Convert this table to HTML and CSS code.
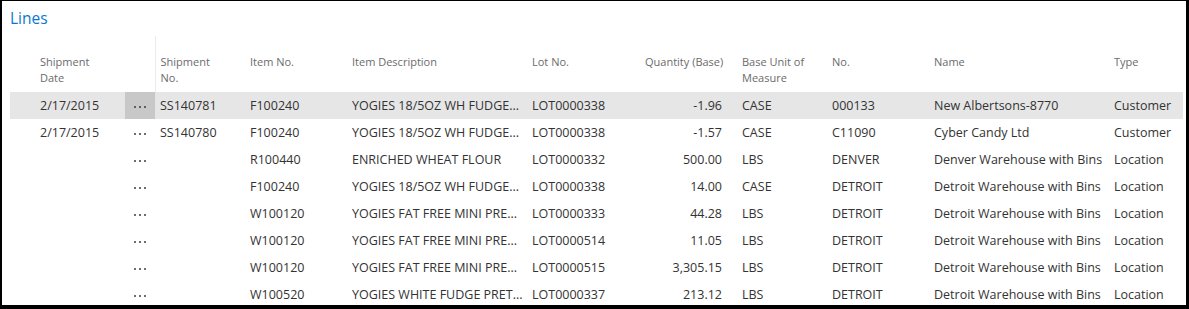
FILE: index.html
```html
<!DOCTYPE html>
<html>
<head>
<meta charset="utf-8">
<link rel="stylesheet" href="styles.css">
</head>
<body>
<div class="frame">
  <div class="title">Lines</div>
  <table class="grid">
    <colgroup>
      <col class="c-date"><col class="c-dots"><col class="c-ship"><col class="c-item"><col class="c-desc"><col class="c-lot"><col class="c-qty"><col class="c-uom"><col class="c-no"><col class="c-name"><col class="c-type">
    </colgroup>
    <thead>
      <tr>
        <th class="first">Shipment<br>Date</th>
        <th class="dots-h"></th>
        <th class="sep">Shipment<br>No.</th>
        <th>Item No.</th>
        <th>Item Description</th>
        <th>Lot No.</th>
        <th class="num">Quantity (Base)</th>
        <th>Base Unit of<br>Measure</th>
        <th>No.</th>
        <th>Name</th>
        <th>Type</th>
      </tr>
    </thead>
    <tbody>
      <tr class="selected">
        <td class="first">2/17/2015</td>
        <td class="dots"><svg width="14" height="4" viewBox="0 0 14 4"><circle cx="2" cy="2" r="1"/><circle cx="7" cy="2" r="1"/><circle cx="12" cy="2" r="1"/></svg></td>
        <td>SS140781</td><td>F100240</td><td>YOGIES 18/5OZ WH FUDGE...</td><td>LOT0000338</td><td class="num">-1.96</td><td>CASE</td><td>000133</td><td>New Albertsons-8770</td><td>Customer</td>
      </tr>
      <tr>
        <td class="first">2/17/2015</td>
        <td class="dots"><svg width="14" height="4" viewBox="0 0 14 4"><circle cx="2" cy="2" r="1"/><circle cx="7" cy="2" r="1"/><circle cx="12" cy="2" r="1"/></svg></td>
        <td>SS140780</td><td>F100240</td><td>YOGIES 18/5OZ WH FUDGE...</td><td>LOT0000338</td><td class="num">-1.57</td><td>CASE</td><td>C11090</td><td>Cyber Candy Ltd</td><td>Customer</td>
      </tr>
      <tr>
        <td class="first"></td>
        <td class="dots"><svg width="14" height="4" viewBox="0 0 14 4"><circle cx="2" cy="2" r="1"/><circle cx="7" cy="2" r="1"/><circle cx="12" cy="2" r="1"/></svg></td>
        <td></td><td>R100440</td><td>ENRICHED WHEAT FLOUR</td><td>LOT0000332</td><td class="num">500.00</td><td>LBS</td><td>DENVER</td><td>Denver Warehouse with Bins</td><td>Location</td>
      </tr>
      <tr>
        <td class="first"></td>
        <td class="dots"><svg width="14" height="4" viewBox="0 0 14 4"><circle cx="2" cy="2" r="1"/><circle cx="7" cy="2" r="1"/><circle cx="12" cy="2" r="1"/></svg></td>
        <td></td><td>F100240</td><td>YOGIES 18/5OZ WH FUDGE...</td><td>LOT0000338</td><td class="num">14.00</td><td>CASE</td><td>DETROIT</td><td>Detroit Warehouse with Bins</td><td>Location</td>
      </tr>
      <tr>
        <td class="first"></td>
        <td class="dots"><svg width="14" height="4" viewBox="0 0 14 4"><circle cx="2" cy="2" r="1"/><circle cx="7" cy="2" r="1"/><circle cx="12" cy="2" r="1"/></svg></td>
        <td></td><td>W100120</td><td>YOGIES FAT FREE MINI PRE...</td><td>LOT0000333</td><td class="num">44.28</td><td>LBS</td><td>DETROIT</td><td>Detroit Warehouse with Bins</td><td>Location</td>
      </tr>
      <tr>
        <td class="first"></td>
        <td class="dots"><svg width="14" height="4" viewBox="0 0 14 4"><circle cx="2" cy="2" r="1"/><circle cx="7" cy="2" r="1"/><circle cx="12" cy="2" r="1"/></svg></td>
        <td></td><td>W100120</td><td>YOGIES FAT FREE MINI PRE...</td><td>LOT0000514</td><td class="num">11.05</td><td>LBS</td><td>DETROIT</td><td>Detroit Warehouse with Bins</td><td>Location</td>
      </tr>
      <tr>
        <td class="first"></td>
        <td class="dots"><svg width="14" height="4" viewBox="0 0 14 4"><circle cx="2" cy="2" r="1"/><circle cx="7" cy="2" r="1"/><circle cx="12" cy="2" r="1"/></svg></td>
        <td></td><td>W100120</td><td>YOGIES FAT FREE MINI PRE...</td><td>LOT0000515</td><td class="num">3,305.15</td><td>LBS</td><td>DETROIT</td><td>Detroit Warehouse with Bins</td><td>Location</td>
      </tr>
      <tr>
        <td class="first"></td>
        <td class="dots"><svg width="14" height="4" viewBox="0 0 14 4"><circle cx="2" cy="2" r="1"/><circle cx="7" cy="2" r="1"/><circle cx="12" cy="2" r="1"/></svg></td>
        <td></td><td>W100520</td><td>YOGIES WHITE FUDGE PRET...</td><td>LOT0000337</td><td class="num">213.12</td><td>LBS</td><td>DETROIT</td><td>Detroit Warehouse with Bins</td><td>Location</td>
      </tr>
    </tbody>
  </table>
</div>
</body>
</html>
```

FILE: styles.css
```css
html, body {
  margin: 0;
  padding: 0;
  background: #fff;
}
.frame {
  box-sizing: border-box;
  width: 1189px;
  height: 309px;
  border-top: 1px solid #000;
  border-left: 2px solid #000;
  border-right: 3px solid #000;
  border-bottom: 4px solid #000;
  overflow: hidden;
  padding: 0 0 0 8px;
  font-family: "Open Sans", "Liberation Sans", sans-serif;
  color: #333;
}
.title {
  height: 35px;
  box-sizing: border-box;
  padding-top: 7px;
  font-size: 15.5px;
  line-height: 20px;
  color: #0a78d2;
}
.grid {
  border-collapse: collapse;
  table-layout: fixed;
  width: 1173px;
}
.c-date { width: 115px; }
.c-dots { width: 30px; }
.c-ship { width: 90px; }
.c-item { width: 102px; }
.c-desc { width: 180px; }
.c-lot { width: 113px; }
.c-qty { width: 97px; }
.c-uom { width: 90px; }
.c-no { width: 102px; }
.c-name { width: 180px; }
.c-type { width: 74px; }
.grid th {
  font-weight: normal;
  font-size: 11px;
  line-height: 16px;
  color: #6b6b6b;
  text-align: left;
  vertical-align: top;
  padding: 18px 0 6px 5px;
  height: 32px;
  white-space: nowrap;
}
.grid th.first, .grid td.first {
  padding-left: 30px;
}
.grid th.sep {
  border-left: 1px solid #ececec;
}
.grid th.num {
  text-align: right;
  padding-right: 22px;
}
.grid td {
  font-size: 12.5px;
  height: 27px;
  line-height: 27px;
  padding: 0 0 0 5px;
  white-space: nowrap;
  overflow: hidden;
}
.grid td.num {
  text-align: right;
  padding-right: 15px;
}
.grid td.dots {
  padding: 0;
  text-align: center;
}
.dots svg {
  display: inline-block;
  vertical-align: middle;
  fill: #3c3c3c;
}
.selected td {
  background: #e6e6e6;
}
.selected td.dots {
  background: #c8c8c8;
}
```
